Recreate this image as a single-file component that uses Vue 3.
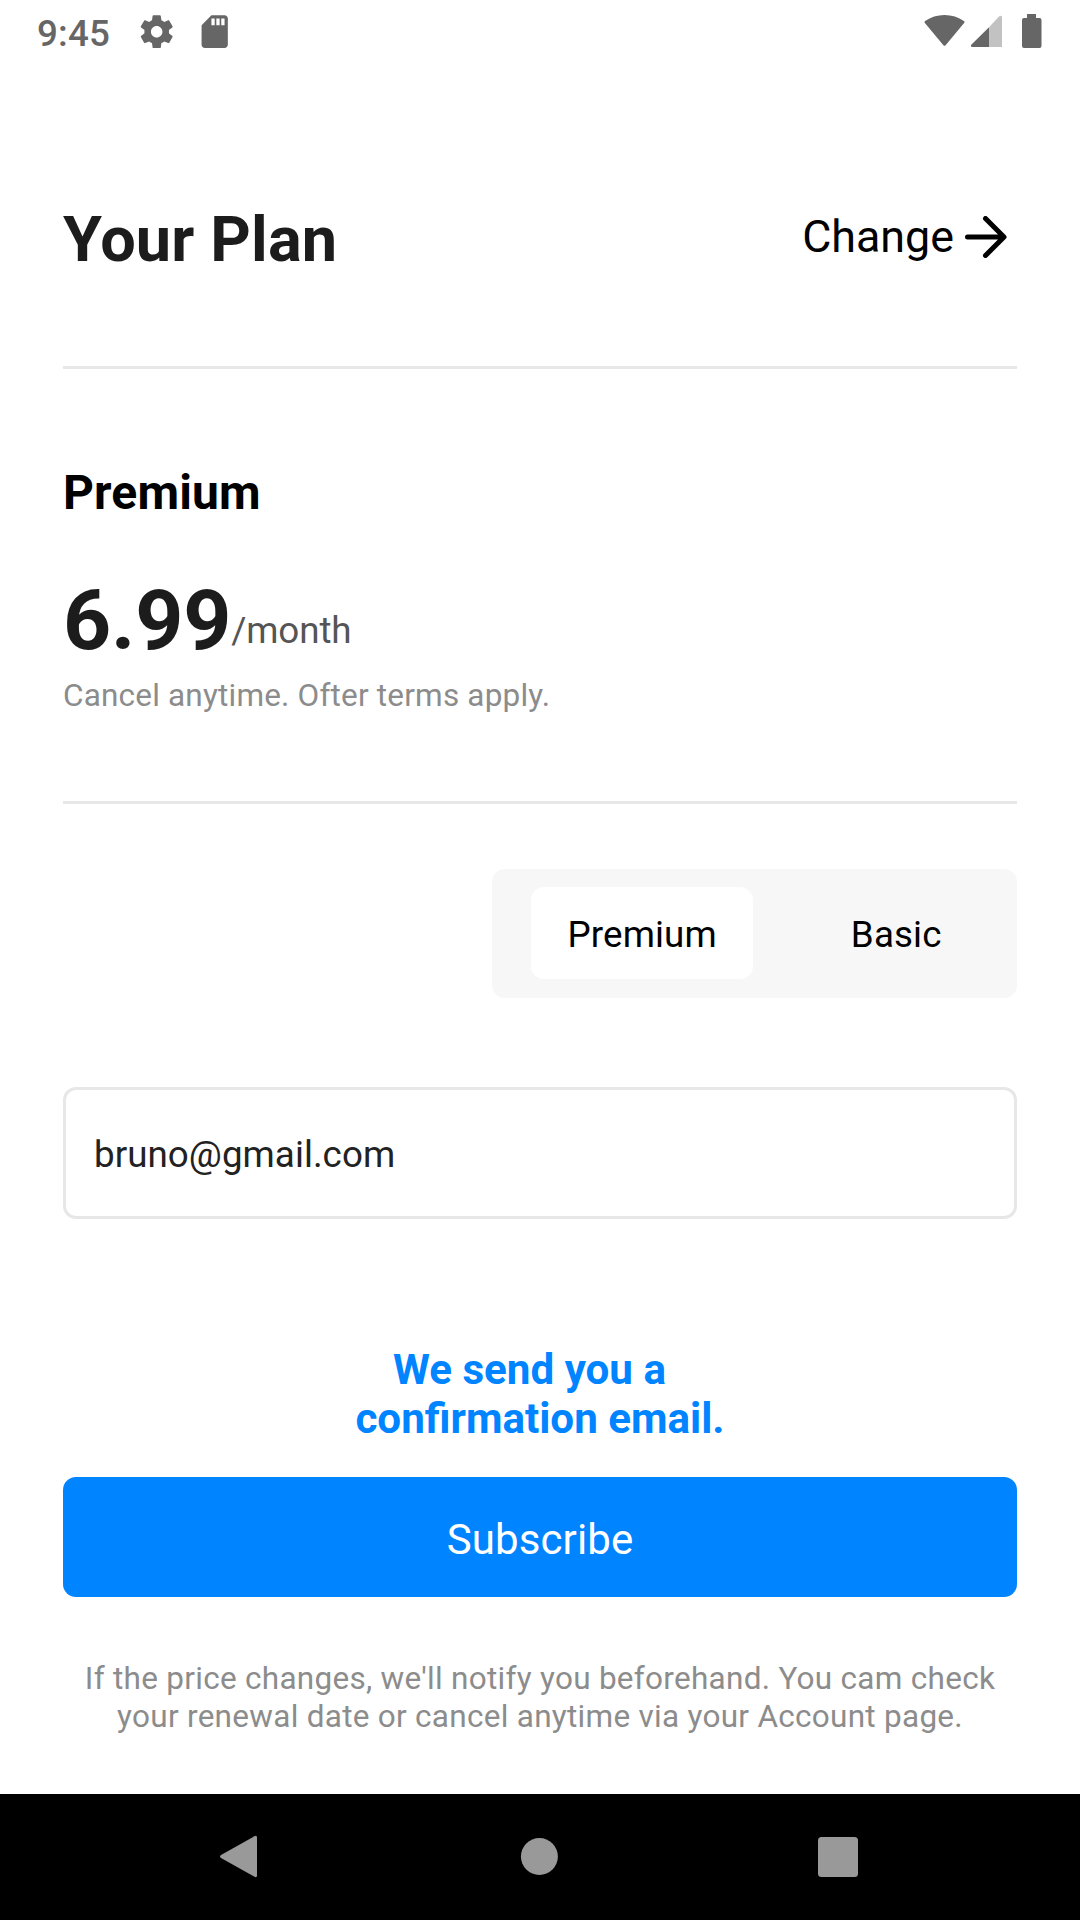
<script setup>
import { ref } from 'vue'

const plans = ['Premium', 'Basic']
const selected = ref('Premium')
const email = ref('bruno@gmail.com')
</script>

<template>
  <div class="screen">
    <div class="status">
      <span class="clock">9:45</span>
      <svg class="gear" viewBox="0 0 24 24"><path d="M19.43 12.98c.04-.32.07-.64.07-.98s-.03-.66-.07-.98l2.11-1.65c.19-.15.24-.42.12-.64l-2-3.46c-.12-.22-.39-.3-.61-.22l-2.49 1c-.52-.4-1.08-.73-1.69-.98l-.38-2.65C14.46 2.18 14.25 2 14 2h-4c-.25 0-.46.18-.49.42l-.38 2.65c-.61.25-1.17.59-1.69.98l-2.49-1c-.23-.09-.49 0-.61.22l-2 3.46c-.13.22-.07.49.12.64l2.11 1.65c-.04.32-.07.65-.07.98s.03.66.07.98l-2.11 1.65c-.19.15-.24.42-.12.64l2 3.46c.12.22.39.3.61.22l2.49-1c.52.4 1.08.73 1.69.98l.38 2.65c.03.24.24.42.49.42h4c.25 0 .46-.18.49-.42l.38-2.65c.61-.25 1.17-.59 1.69-.98l2.49 1c.23.09.49 0 .61-.22l2-3.46c.12-.22.07-.49-.12-.64l-2.11-1.65zM12 15.5c-1.93 0-3.5-1.57-3.5-3.5s1.57-3.5 3.5-3.5 3.5 1.57 3.5 3.5-1.57 3.5-3.5 3.5z" /></svg>
      <svg class="sd" viewBox="0 0 24 24"><path d="M18 2h-8L4.02 8 4 20c0 1.1.9 2 2 2h12c1.1 0 2-.9 2-2V4c0-1.1-.9-2-2-2zm-6 6h-2V4h2v4zm3 0h-2V4h2v4zm3 0h-2V4h2v4z" /></svg>
      <svg class="signals" viewBox="0 0 120 36">
        <path d="M.9 8.9Q-.1 7.8 1.1 6.9Q9.500 .9 20.500 .9Q31.500 .9 39.900 6.900Q41.100 7.800 40.100 8.900L21.600 31.200Q20.500 32.300 19.400 31.200Z" />
        <path d="M75 2.600C77 .800 78 2 78 3.500V33H65V13.200Z" opacity=".4" />
        <path d="M65 13.200V33H48.500C46.500 33 46.500 31.200 47.500 30.500Z" />
        <path d="M103 0h9v4h3.500q2 0 2 2v26q0 2-2 2h-15.500q-2 0-2-2v-26q0-2 2-2h3z" />
      </svg>
    </div>

    <main class="content">
      <header class="header">
        <h1>Your Plan</h1>
        <a class="change">
          <span>Change</span>
          <svg viewBox="0 0 42 42"><path d="M2.500 21H38.500M20.500 2.500L39 21L20.500 39.500" /></svg>
        </a>
      </header>

      <section class="plan">
        <h2>Premium</h2>
        <div class="price"><strong>6.99</strong><span>/month</span></div>
        <p>Cancel anytime. Ofter terms apply.</p>
      </section>

      <div class="toggle">
        <button v-for="p in plans" :key="p" :class="{ active: p === selected }" @click="selected = p">{{ p }}</button>
      </div>

      <div class="field">{{ email }}</div>

      <div class="confirm"><span class="first">We send you a</span><span>confirmation email.</span></div>
      <button class="subscribe">Subscribe</button>
      <p class="terms">If the price changes, we'll notify you beforehand. You cam check<br />your renewal date or cancel anytime via your Account page.</p>
    </main>

    <nav class="nav">
      <svg viewBox="0 0 44 44"><path d="M36.500 1.200Q39 0 39 2.500V40.500Q39 43 36.500 41.800L3 22.900Q1 21.500 3 20.100Z" /></svg>
      <svg viewBox="0 0 44 44"><circle cx="22.400" cy="21.500" r="18.500" /></svg>
      <svg viewBox="0 0 44 44"><rect x="2" y="2" width="40" height="40" rx="3.500" /></svg>
    </nav>
  </div>
</template>

<style>
body { margin: 0; background: #fff; }
</style>

<style scoped>
.screen {
  width: 1080px;
  height: 1920px;
  display: flex;
  flex-direction: column;
  background: #fff;
  font-family: Roboto, sans-serif;
  overflow: hidden;
}
h1, h2, p { margin: 0; }
button { border: 0; padding: 0; background: none; font-family: inherit; color: #000; }

.status {
  height: 63px;
  flex: none;
  display: flex;
  align-items: center;
  box-sizing: border-box;
  padding-left: 37px;
  padding-right: 36px;
  fill: #666;
}
.clock { width: 100.200px; font-size: 36.750px; font-weight: 500; color: #666; line-height: 63px; padding-top: 3px; letter-spacing: .2px; }
.gear, .sd { width: 39.400px; height: 39.400px; }
.sd { margin-left: 18.600px; }
.signals { width: 120px; height: 36px; margin-left: auto; }

.content { flex: 1; padding: 0 63px; display: flex; flex-direction: column; }
.header {
  height: 306px;
  box-sizing: border-box;
  border-bottom: 3px solid #e7e7e7;
  display: flex;
  justify-content: space-between;
  align-items: flex-start;
}
h1 { margin-top: 140px; font-size: 63px; line-height: 74px; color: #1c1c1c; letter-spacing: .15px; }
.change {
  display: flex;
  align-items: center;
  gap: 11px;
  margin: 146px 10px 0 0;
  font-size: 44.800px;
  line-height: 56px;
  color: #000;
}
.change svg { width: 42px; height: 42px; fill: none; stroke: #000; stroke-width: 5; stroke-linecap: round; stroke-linejoin: round; }

.plan { height: 435px; box-sizing: border-box; border-bottom: 3px solid #e7e7e7; padding-top: 96px; }
h2 { font-size: 48px; line-height: 56px; color: #000; letter-spacing: .15px; }
.price { display: flex; height: 98px; margin-top: 51px; }
.price strong { font-size: 84px; line-height: 98px; color: #1c1c1c; letter-spacing: -.2px; }
.price span { font-size: 36.750px; line-height: 44px; margin-top: 37px; color: #555; letter-spacing: -.1px; }
.plan p { font-size: 31.500px; line-height: 38px; margin-top: 7px; color: #8c8c8c; letter-spacing: .19px; }

.toggle {
  align-self: flex-end;
  width: 525px;
  height: 129px;
  margin-top: 65px;
  box-sizing: border-box;
  padding: 18px 39px;
  display: flex;
  justify-content: space-between;
  background: #f7f7f7;
  border-radius: 13px;
}
.toggle button { height: 92px; padding: 2px 36.500px 0; border-radius: 13px; font-size: 36.750px; letter-spacing: .12px; }
.toggle .active { background: #fff; }

.field {
  height: 132px;
  box-sizing: border-box;
  margin-top: 89px;
  border: 3px solid #e7e7e7;
  border-radius: 13px;
  padding-left: 28px;
  line-height: 129px;
  font-size: 36.750px;
  letter-spacing: .05px;
  color: #222;
}
.confirm {
  margin-top: 126px;
  display: flex;
  flex-direction: column;
  align-items: center;
  font-size: 42.150px;
  line-height: 49px;
  font-weight: 700;
  color: #0084ff;
}
.first { padding-right: 21px; }
.subscribe {
  height: 120px;
  flex: none;
  margin-top: 34px;
  border-radius: 13px;
  background: #0084ff;
  color: #fff;
  font-size: 42px;
  letter-spacing: .1px;
  padding-top: 5px;
}
.terms { margin-top: 63px; text-align: center; font-size: 31.500px; line-height: 38px; color: #8c8c8c; white-space: nowrap; letter-spacing: .28px; }

.nav {
  height: 126px;
  flex: none;
  box-sizing: border-box;
  padding-right: 2px;
  background: #000;
  display: flex;
  justify-content: center;
  align-items: center;
  gap: 255px;
  fill: #999;
}
.nav svg { width: 44px; height: 44px; }
</style>
